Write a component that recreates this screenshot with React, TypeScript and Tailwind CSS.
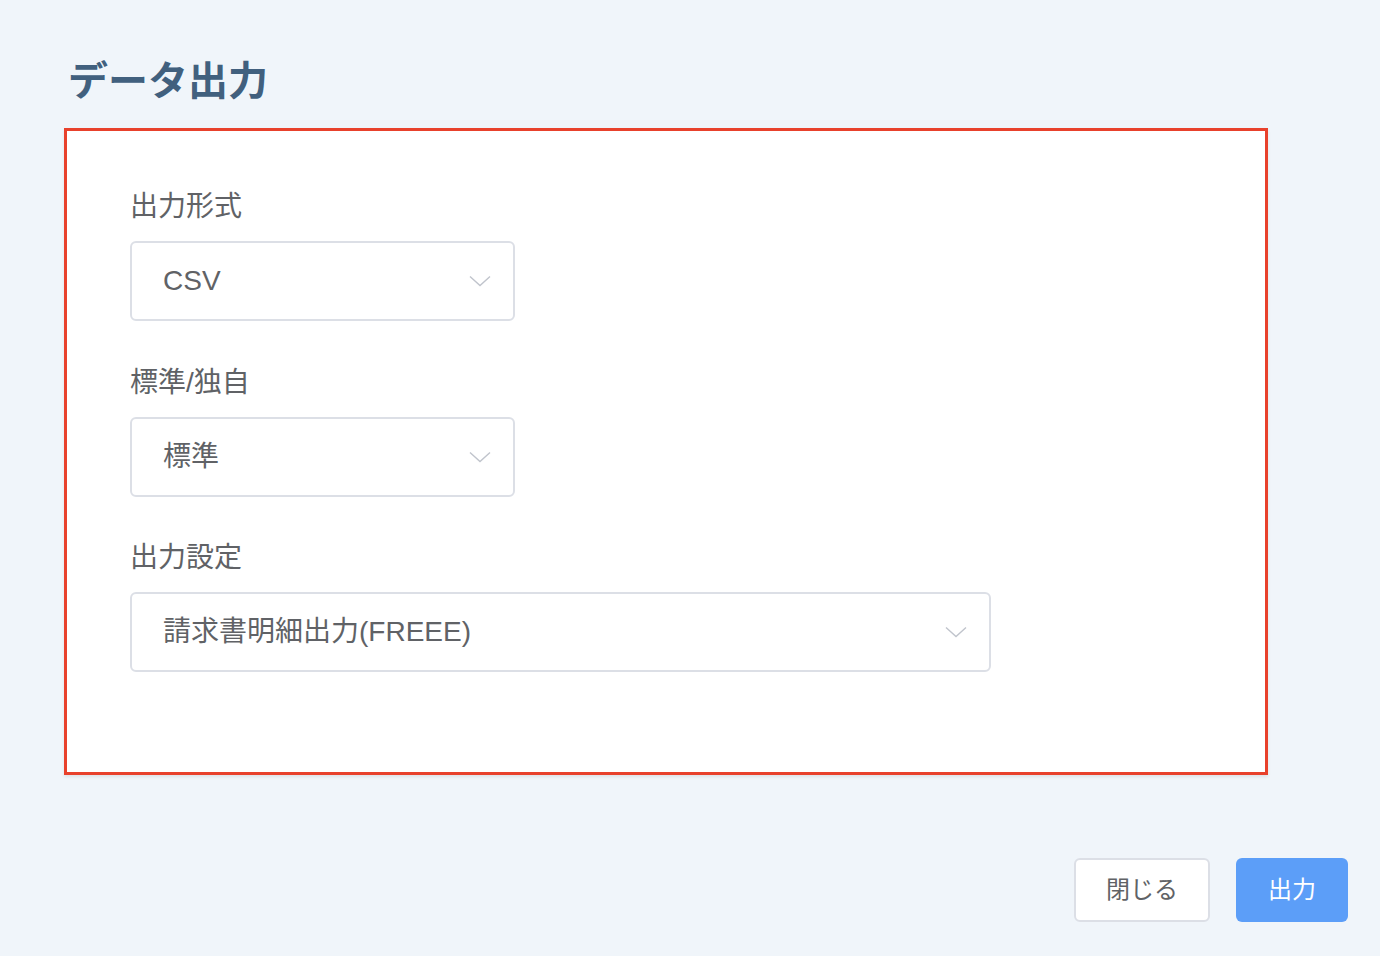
import React from "react";

const FONT = "font-['Liberation_Sans','Noto_Sans_CJK_JP',sans-serif]";

type Field = {
  label: string;
  value: string;
  width: string;
};

const FIELDS: Field[] = [
  { label: "出力形式", value: "CSV", width: "w-[385px]" },
  { label: "標準/独自", value: "標準", width: "w-[385px]" },
  { label: "出力設定", value: "請求書明細出力(FREEE)", width: "w-[861px]" },
];

function Chevron() {
  return (
    <svg width="22" height="12" viewBox="0 0 22 12" fill="none" className="shrink-0">
      <path d="M1 1.5 L11 10.5 L21 1.5" stroke="#c0c4cc" strokeWidth="1.4" />
    </svg>
  );
}

function SelectBox({ field }: { field: Field }) {
  return (
    <div className="flex flex-col">
      <p className="h-[40px] text-[28px] leading-[44px] text-[#606266]">{field.label}</p>
      <div
        className={`${field.width} mt-[16px] flex h-[80px] items-center justify-between rounded-[6px] border-2 border-[#dcdfe6] bg-white pl-[31px] pr-[22px]`}
      >
        <span className="text-[28px] text-[#606266]">{field.value}</span>
        <Chevron />
      </div>
    </div>
  );
}

export default function App() {
  return (
    <div className={`${FONT} min-h-[956px] w-full bg-[#f0f5fa]`}>
      <div className="pl-[64px] pt-[56px]">
        <h1 className="pl-[4px] text-[40px] font-bold leading-[50px] text-[#41607e]">データ出力</h1>
        <div className="mt-[22px] w-[1204px] border-[3px] border-[#e8412c] bg-white pb-[100px] pl-[63px] pt-[54px] shadow-[0_2px_3px_rgba(0,0,0,0.08)]">
          <div className="flex flex-col gap-[39.5px]">
            {FIELDS.map((f) => (
              <SelectBox key={f.label} field={f} />
            ))}
          </div>
        </div>
      </div>
      <div className="mt-[83px] flex justify-end gap-[26px] pr-[32px]">
        <button className="flex h-[64px] w-[136px] items-center justify-center rounded-[6px] border-2 border-[#dcdfe6] bg-white text-[24px] text-[#606266]">
          閉じる
        </button>
        <button className="flex h-[64px] w-[112px] items-center justify-center rounded-[6px] bg-[#5c9ef8] text-[24px] text-white">
          出力
        </button>
      </div>
    </div>
  );
}
